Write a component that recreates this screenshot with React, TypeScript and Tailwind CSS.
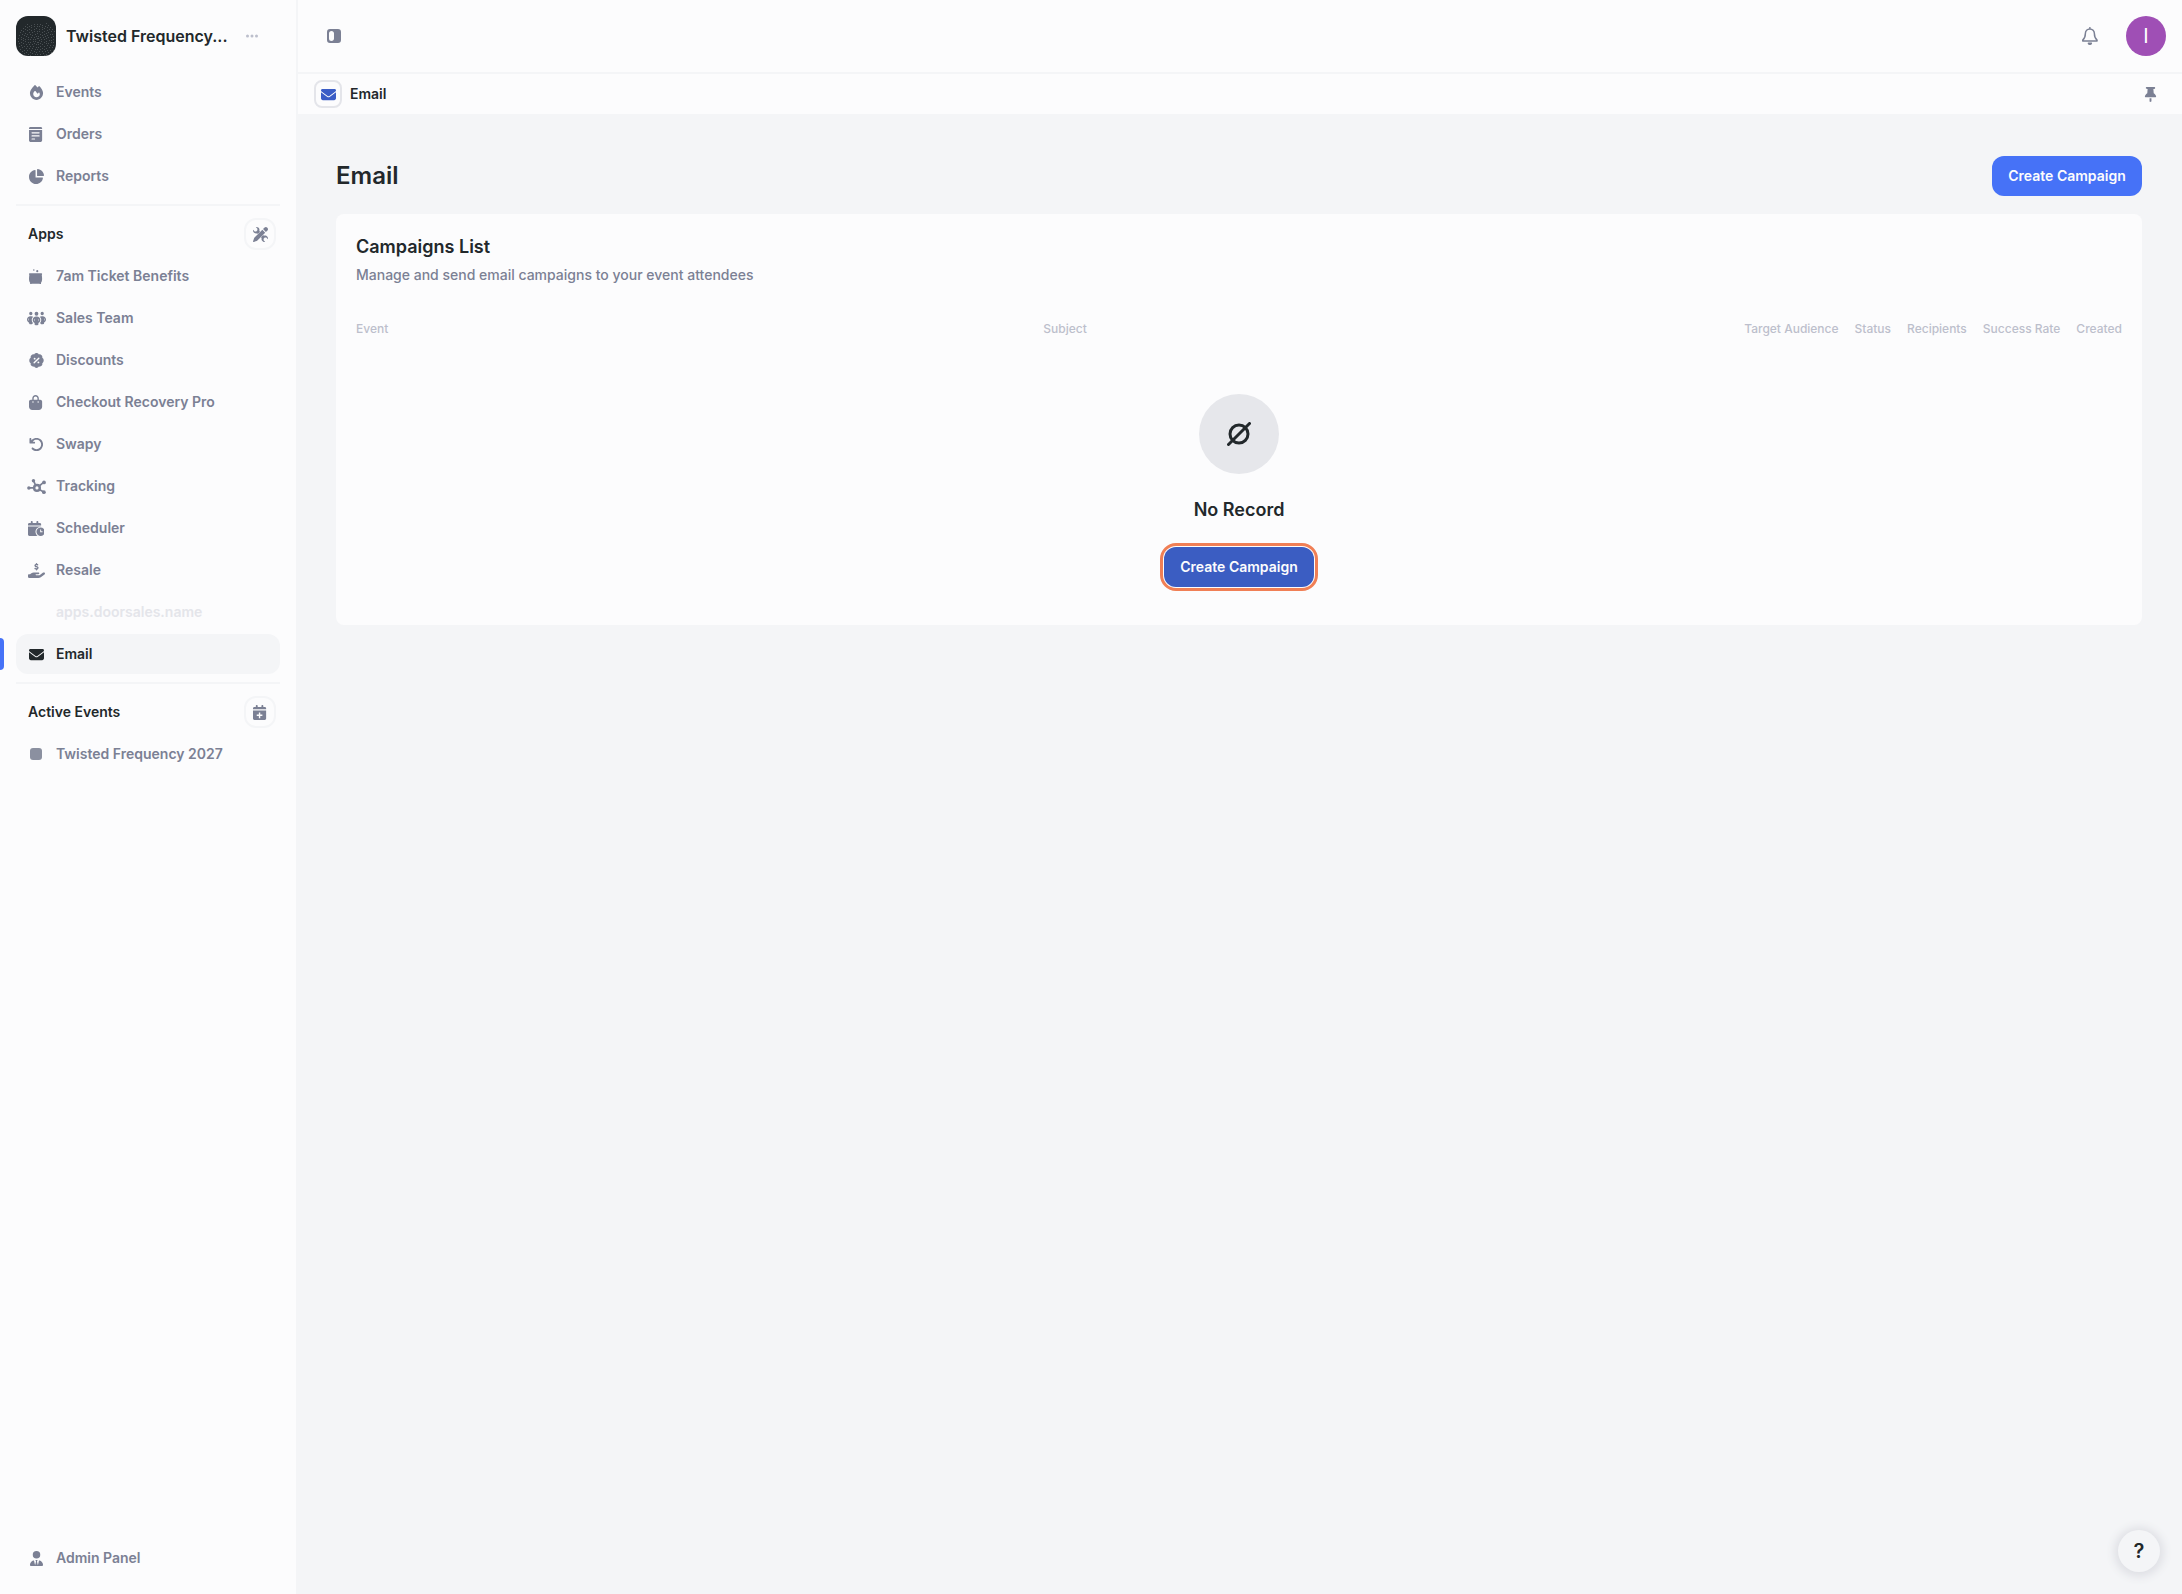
import type { ReactNode } from "react";
import {
  FaArrowRotateLeft,
  FaEnvelope,
  FaFire,
  FaHandHoldingDollar,
  FaPeopleGroup,
  FaThumbtack,
  FaUserTie,
} from "react-icons/fa6";

const iconSize = "h-[15px] w-auto";

function OrdersIcon() {
  return (
    <svg viewBox="0 0 448 512" className={iconSize} fill="currentColor" aria-hidden="true">
      <path d="M48 0H400C427 0 448 21 448 48V68H0V48C0 21 21 0 48 0Z" />
      <path
        fillRule="evenodd"
        d="M0 100H448V448C448 483 419 512 384 512H64C29 512 0 483 0 448ZM104 178a20 20 0 0 0 0 40H344a20 20 0 0 0 0-40ZM104 284a20 20 0 0 0 0 40H344a20 20 0 0 0 0-40ZM104 390a20 20 0 0 0 0 40H190a20 20 0 0 0 0-40Z"
      />
    </svg>
  );
}

function PieIcon() {
  return (
    <svg viewBox="0 0 512 512" className={iconSize} fill="currentColor" aria-hidden="true">
      <path d="M224 52C224 42 216 34 206 36C90 50 0 150 0 270C0 403 108 512 242 512C362 512 462 422 476 306C478 296 470 288 460 288H224Z" />
      <path d="M276 18C276 7 285-1 296 0C410 12 500 102 512 216C513 227 505 236 494 236H276Z" />
    </svg>
  );
}

function CupIcon() {
  return (
    <svg viewBox="0 0 448 512" className={iconSize} fill="currentColor" aria-hidden="true">
      <circle cx="165" cy="36" r="26" />
      <circle cx="282" cy="74" r="36" />
      <path d="M24 144H424C440 144 450 156 447 171L437 216C440 250 448 290 448 330C448 390 432 440 410 470V512H372L352 500H96L76 512H38V470C16 440 0 390 0 330C0 290 8 250 11 216L1 171C-2 156 8 144 24 144Z" />
    </svg>
  );
}

function DiscountIcon() {
  return (
    <svg viewBox="0 0 512 512" className={iconSize} fill="currentColor" aria-hidden="true">
      <path
        fillRule="evenodd"
        d="M256 0C291 0 321 20 337 49C369 40 404 47 429 73C454 98 462 133 453 165C482 181 502 211 502 256C502 291 482 331 453 347C462 379 454 414 429 439C404 465 369 472 337 463C321 492 291 512 256 512C221 512 191 492 175 463C143 472 108 465 83 439C58 414 50 379 59 347C30 331 10 301 10 256C10 211 30 181 59 165C50 133 58 98 83 73C108 47 143 40 175 49C191 20 221 0 256 0ZM192 160a32 32 0 1 0 0 64a32 32 0 1 0 0-64ZM320 288a32 32 0 1 0 0 64a32 32 0 1 0 0-64ZM318 159L159 318A24 24 0 0 0 193 352L352 193A24 24 0 0 0 318 159Z"
      />
    </svg>
  );
}

function BagIcon() {
  return (
    <svg viewBox="0 0 448 512" className={iconSize} fill="currentColor" aria-hidden="true">
      <path
        fillRule="evenodd"
        d="M112 160V112C112 50 162 0 224 0S336 50 336 112V160H384C419 160 448 189 448 224V400C448 462 398 512 336 512H112C50 512 0 462 0 400V224C0 189 29 160 64 160ZM160 160H288V112C288 77 259 48 224 48S160 77 160 112ZM136 216a24 24 0 1 0 0 48a24 24 0 1 0 0-48ZM312 216a24 24 0 1 0 0 48a24 24 0 1 0 0-48Z"
      />
    </svg>
  );
}

function NetworkIcon() {
  return (
    <svg viewBox="0 0 640 512" className="h-[15px] w-[19px]" fill="none" stroke="currentColor" aria-hidden="true">
      <path strokeWidth="56" d="M64 304H250M222 66L294 226M392 256L560 118M402 352L566 446" />
      <circle cx="336" cy="304" r="96" strokeWidth="84" />
      <g fill="currentColor" stroke="none">
        <circle cx="60" cy="304" r="60" />
        <circle cx="216" cy="60" r="58" />
        <circle cx="576" cy="116" r="64" />
        <circle cx="572" cy="448" r="64" />
      </g>
    </svg>
  );
}

function CalendarClockIcon() {
  return (
    <svg viewBox="0 0 576 512" className={iconSize} fill="currentColor" aria-hidden="true">
      <path d="M128 0c18 0 32 14 32 32v32h128V32c0-18 14-32 32-32s32 14 32 32v32h48c27 0 48 21 48 48v40H0v-40c0-27 21-48 48-48h48V32C96 14 110 0 128 0Z" />
      <path d="M0 184H448V194C439 192 442 192 432 192C335 192 256 271 256 368C256 426 284 478 328 512H48C21 512 0 491 0 464Z" />
      <path
        fillRule="evenodd"
        d="M432 224a144 144 0 1 1 0 288a144 144 0 1 1 0-288ZM416 290V384H496V352H448V290Z"
      />
    </svg>
  );
}

function CalendarPlusIcon() {
  return (
    <svg viewBox="0 0 448 512" className={iconSize} fill="currentColor" aria-hidden="true">
      <path d="M128 0c18 0 32 14 32 32v32h128V32c0-18 14-32 32-32s32 14 32 32v32h48c27 0 48 21 48 48v36H0v-36c0-27 21-48 48-48h48V32C96 14 110 0 128 0Z" />
      <path
        fillRule="evenodd"
        d="M0 184H448V464C448 491 427 512 400 512H48C21 512 0 491 0 464ZM200 256V328H128V376H200V448H248V376H320V328H248V256Z"
      />
    </svg>
  );
}

function PenWrenchIcon() {
  return (
    <svg viewBox="0 0 512 512" className={iconSize} fill="currentColor" aria-hidden="true">
      <path d="M396 18C420-6 458-6 482 18L494 30C518 54 518 92 494 116L440 170L342 72ZM319 95L417 193L150 460C143 467 134 472 124 475L24 510C8 515-4 503 2 488L37 388C40 378 45 369 52 362Z" />
      <path d="M96 4L150 58V110L110 150H58L4 96C-6 142 14 186 52 208C80 224 112 226 140 216L164 240L240 164L216 140C230 96 216 48 180 20C154 2 124-4 96 4Z" />
      <path d="M272 348L348 272L372 296C416 282 464 296 492 332C510 358 516 388 508 416L454 362H402L362 402V454L416 508C370 518 326 498 304 460C288 432 286 400 296 372Z" />
    </svg>
  );
}

function BellIcon() {
  return (
    <svg viewBox="0 0 448 512" className="h-[18px] w-auto" fill="none" stroke="currentColor" strokeWidth="42" strokeLinejoin="round" strokeLinecap="round" aria-hidden="true">
      <path d="M224 16V52M224 54C150 54 96 112 96 184C96 258 84 314 20 372V396H428V372C364 314 352 258 352 184C352 112 298 54 224 54Z" />
      <path d="M182 462C192 500 256 500 266 462Z" fill="currentColor" />
    </svg>
  );
}

function PanelIcon() {
  return (
    <svg viewBox="0 0 14 14" className="size-[14px]" fill="currentColor" aria-hidden="true">
      <path
        fillRule="evenodd"
        d="M3 0H11A3 3 0 0 1 14 3V11A3 3 0 0 1 11 14H3A3 3 0 0 1 0 11V3A3 3 0 0 1 3 0ZM4.500 2A2.500 2.500 0 0 0 2 4.500V9.500A2.500 2.500 0 0 0 4.500 12C6 12 7 11 7 9.500V4.500C7 3 6 2 4.500 2Z"
      />
    </svg>
  );
}

function EmptySetIcon() {
  return (
    <svg viewBox="0 0 24 24" className="size-6" fill="none" stroke="currentColor" strokeWidth="3" strokeLinecap="round" aria-hidden="true">
      <circle cx="12" cy="12" r="9" />
      <path d="M1.500 22.500L22.500 1.500" />
    </svg>
  );
}

function Logo() {
  const dots: ReactNode[] = [];
  for (let ring = 0; ring < 8; ring++) {
    const count = 7 + ring * 5;
    for (let i = 0; i < count; i++) {
      const a = (i / count) * Math.PI * 2 + ring * 0.7;
      const r = 2 + ring * 2.4;
      const x = 21 + Math.cos(a) * r;
      const y = 24 + Math.sin(a) * r;
      if (x > 2 && x < 38 && y > 7 && y < 39) {
        dots.push(<rect key={`${ring}-${i}`} x={Math.round(x)} y={Math.round(y)} width="1" height="1" />);
      }
    }
  }
  return (
    <span className="size-10 shrink-0 overflow-hidden rounded-xl bg-[#22282b]">
      <svg viewBox="0 0 40 40" className="size-10" fill="#4a5053" aria-hidden="true">
        {dots}
      </svg>
    </span>
  );
}

type Item = { label: string; icon: ReactNode; active?: boolean; disabled?: boolean };

const mainItems: Item[] = [
  { label: "Events", icon: <FaFire className={iconSize} /> },
  { label: "Orders", icon: <OrdersIcon /> },
  { label: "Reports", icon: <PieIcon /> },
];

const appItems: Item[] = [
  { label: "7am Ticket Benefits", icon: <CupIcon /> },
  { label: "Sales Team", icon: <FaPeopleGroup className="size-[19px]" /> },
  { label: "Discounts", icon: <DiscountIcon /> },
  { label: "Checkout Recovery Pro", icon: <BagIcon /> },
  { label: "Swapy", icon: <FaArrowRotateLeft className={iconSize} /> },
  { label: "Tracking", icon: <NetworkIcon /> },
  { label: "Scheduler", icon: <CalendarClockIcon /> },
  { label: "Resale", icon: <FaHandHoldingDollar className="size-[17px]" /> },
  { label: "apps.doorsales.name", icon: null, disabled: true },
  { label: "Email", icon: <FaEnvelope className={iconSize} />, active: true },
];

const eventItems: Item[] = [
  { label: "Twisted Frequency 2027", icon: <span className="size-3 rounded-[3px] bg-[#8b90a0]" /> },
];

const adminItems: Item[] = [{ label: "Admin Panel", icon: <FaUserTie className={iconSize} /> }];

function NavList({ items }: { items: Item[] }) {
  return (
    <ul className="flex flex-col gap-0.5">
      {items.map((item) => (
        <li key={item.label} className="relative">
          {item.active && <span className="absolute inset-y-1 -left-4 w-1 rounded-r bg-[#4672f7]" />}
          <a
            href="#"
            aria-current={item.active ? "page" : undefined}
            className={
              item.active
                ? "flex h-10 items-center gap-2 rounded-xl bg-[#f4f5f7] px-2 text-[#22282b]"
                : item.disabled
                  ? "flex h-10 items-center gap-2 rounded-xl px-2 text-[#e4e5ea]"
                  : "flex h-10 items-center gap-2 rounded-xl px-2 text-[#7b8094]"
            }
          >
            <span className="flex w-6 shrink-0 items-center justify-center">{item.icon}</span>
            <span>{item.label}</span>
          </a>
        </li>
      ))}
    </ul>
  );
}

function SectionHead({ title, action, children }: { title: string; action: string; children: ReactNode }) {
  return (
    <div className="flex h-8 items-center justify-between pr-1 pl-3">
      <h2 className="text-[#22282b]">{title}</h2>
      <button
        type="button"
        aria-label={action}
        className="flex size-8 items-center justify-center rounded-xl border-2 border-[#f4f5f7] text-[#7b8094]"
      >
        {children}
      </button>
    </div>
  );
}

function Sidebar() {
  return (
    <aside className="flex w-[298px] shrink-0 flex-col border-r-2 border-[#f4f5f7] bg-[#fcfcfd] p-4 text-sm font-semibold">
      <div className="flex h-10 items-center">
        <Logo />
        <span className="ml-2.5 text-base text-[#22282b]">Twisted Frequency...</span>
        <button type="button" aria-label="Account options" className="mr-4 ml-auto flex size-6 items-center justify-center text-[#bcbfcc]">
          <svg viewBox="0 0 12 4" className="h-1 w-3" fill="currentColor" aria-hidden="true">
            <circle cx="1.500" cy="2" r="1.500" />
            <circle cx="6" cy="2" r="1.500" />
            <circle cx="10.500" cy="2" r="1.500" />
          </svg>
        </button>
      </div>
      <nav className="mt-4 flex flex-1 flex-col">
        <NavList items={mainItems} />
        <hr className="mt-2 mb-3 border-t-2 border-[#f4f5f7]" />
        <SectionHead title="Apps" action="Manage apps">
          <PenWrenchIcon />
        </SectionHead>
        <div className="mt-1.5">
          <NavList items={appItems} />
        </div>
        <hr className="mt-2 mb-3 border-t-2 border-[#f4f5f7]" />
        <SectionHead title="Active Events" action="Add event">
          <CalendarPlusIcon />
        </SectionHead>
        <div className="mt-1.5">
          <NavList items={eventItems} />
        </div>
        <div className="mt-auto">
          <NavList items={adminItems} />
        </div>
      </nav>
    </aside>
  );
}

const columns = [
  { label: "Event", width: "w-[49.6%] pr-4" },
  { label: "Subject", width: "w-[50.4%] pr-4" },
  { label: "Target Audience", width: "w-px pr-4" },
  { label: "Status", width: "w-px pr-4" },
  { label: "Recipients", width: "w-px pr-4" },
  { label: "Success Rate", width: "w-px pr-4" },
  { label: "Created", width: "w-px" },
];

export default function App() {
  return (
    <div className="relative flex min-h-screen bg-[#f4f5f7] font-['Inter',sans-serif] text-[#22282b]">
      <Sidebar />
      <div className="flex min-w-0 flex-1 flex-col">
        <header className="flex h-[74px] items-center justify-between border-b-2 border-[#f4f5f7] bg-[#fcfcfd] px-4">
          <button type="button" aria-label="Toggle sidebar" className="flex size-10 items-center justify-center text-[#7b8094]">
            <PanelIcon />
          </button>
          <div className="flex items-center gap-4">
            <button type="button" aria-label="Notifications" className="flex size-10 items-center justify-center text-[#7b8094]">
              <BellIcon />
            </button>
            <button type="button" aria-label="Profile" className="flex size-10 items-center justify-center rounded-full bg-[#9f4fb5] text-xl text-white">
              I
            </button>
          </div>
        </header>
        <div className="flex h-10 items-center justify-between bg-[#fcfcfd] px-4">
          <div className="flex items-center gap-2 text-sm font-semibold">
            <span className="flex size-7 items-center justify-center rounded-lg border-2 border-[#e4e5ea] text-[#3b5dc6]">
              <FaEnvelope className={iconSize} />
            </span>
            Email
          </div>
          <button type="button" aria-label="Pin" className="flex size-8 items-center justify-center text-[#7b8094]">
            <FaThumbtack className={iconSize} />
          </button>
        </div>
        <main className="px-10 pt-[42px] pl-[38px]">
          <div className="flex items-center justify-between">
            <h1 className="text-2xl font-semibold">Email</h1>
            <button type="button" className="h-10 min-w-[150px] rounded-xl bg-[#4672f7] px-4 text-sm font-semibold text-[#fcfcfd]">
              Create Campaign
            </button>
          </div>
          <section className="mt-[18px] rounded-lg bg-[#fcfcfd] p-5 pb-[38px]">
            <h2 className="text-lg leading-[26px] font-semibold">Campaigns List</h2>
            <p className="mt-[5px] text-sm font-medium text-[#7b8094]">
              Manage and send email campaigns to your event attendees
            </p>
            <table className="mt-8 w-full text-left text-xs font-medium text-[#bcbfcc]">
              <thead>
                <tr>
                  {columns.map((c) => (
                    <th key={c.label} scope="col" className={`${c.width} py-1 font-medium whitespace-nowrap`}>
                      {c.label}
                    </th>
                  ))}
                </tr>
              </thead>
            </table>
            <div className="mt-[53px] flex flex-col items-center">
              <div className="flex size-20 items-center justify-center rounded-full bg-[#e6e7eb]">
                <EmptySetIcon />
              </div>
              <p className="mt-[23px] text-lg leading-[26px] font-semibold">No Record</p>
              <button
                type="button"
                className="mt-6 h-10 min-w-[150px] rounded-xl bg-[#3b5dc2] px-4 text-sm font-semibold text-[#fcfcfd] outline-3 outline-offset-1 outline-[#f07f55]"
              >
                Create Campaign
              </button>
            </div>
          </section>
        </main>
      </div>
      <button
        type="button"
        aria-label="Help"
        className="absolute right-[22px] bottom-[22px] flex size-[42px] items-center justify-center rounded-full bg-[#f4f5f7] text-xl font-semibold shadow-[0_1px_8px_4px_#dfe0e5]"
      >
        ?
      </button>
    </div>
  );
}
